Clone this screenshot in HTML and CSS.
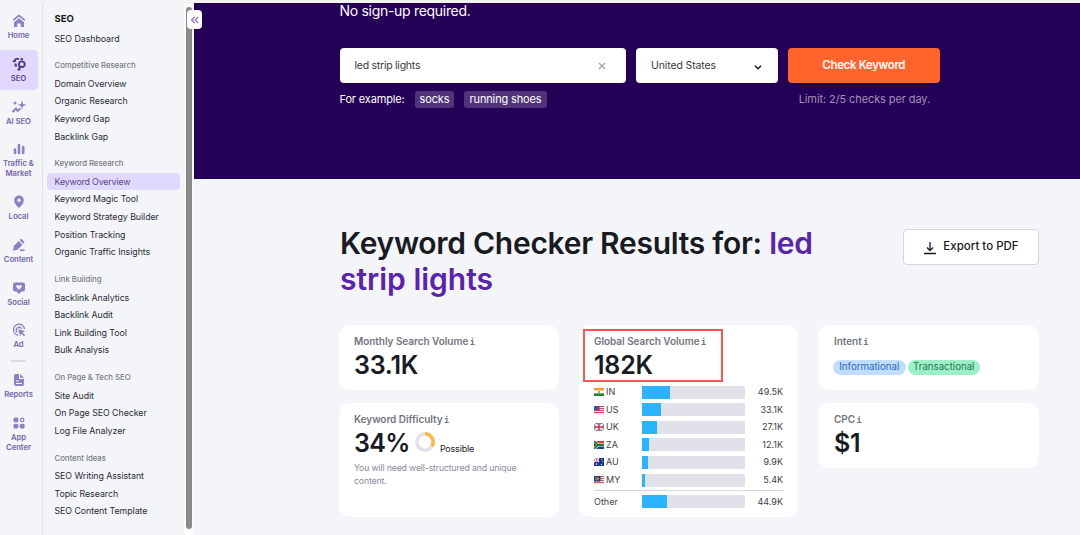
FILE: index.html
```html
<!DOCTYPE html>
<html lang="en">
<head>
<meta charset="utf-8">
<title>Keyword Checker</title>
<link rel="stylesheet" href="styles.css">
</head>
<body>
<div class="topline"></div>
<div class="app">
  <nav class="rail">
    <a class="rail-item"><svg viewBox="0 0 14 14"><path d="M1.200 6.200 7 1.600 12.800 6.200" fill="none" stroke="currentColor" stroke-width="1.600"/><path d="M7 4.300 12 8.300V13H8.700V9.500H5.300V13H2V8.300z" fill="currentColor"/></svg>Home</a>
    <a class="rail-item active"><svg viewBox="0 0 14 14" fill="none" stroke="currentColor" stroke-width="1.800"><circle cx="9.800" cy="7.300" r="2.900"/><path d="M7 1.800H5Q2.800 1.800 2.800 4V5M.700 4.300H2.800M3.500 6.500V8.500H5M5.500 12.500H7.500V9.500M8.500 2.200H11"/></svg>SEO</a>
    <a class="rail-item"><svg viewBox="0 0 14 14" fill="currentColor"><path d="M10 .500 11.100 3.900 14.500 5 11.100 6.100 10 9.500 8.900 6.100 5.500 5 8.900 3.900zM3 .800 3.700 2.300 5.200 3 3.700 3.700 3 5.200 2.300 3.700.800 3 2.300 2.300z"/><path d="m.500 12 3.500-3.500 1.500 2.300L8.500 8.500" fill="none" stroke="currentColor" stroke-width="2"/></svg>AI SEO</a>
    <a class="rail-item two"><svg viewBox="0 0 14 14" fill="none" stroke="currentColor" stroke-width="2.600" stroke-linecap="round"><path d="M3 7.500V11M7 3V11M11.200 5V11"/></svg>Traffic &amp;<br>Market</a>
    <a class="rail-item"><svg viewBox="0 0 14 14"><path d="M7 .500C4 .500 2.200 2.800 2.200 5.200 2.200 8.500 5 11 7 13 9 11 11.800 8.500 11.800 5.200 11.800 2.800 10 .500 7 .500zM7 3.500A1.700 1.700 0 1 1 7 6.900 1.700 1.700 0 1 1 7 3.500z" fill="currentColor" fill-rule="evenodd"/></svg>Local</a>
    <a class="rail-item"><svg viewBox="0 0 14 14" fill="currentColor"><path d="m1.800 8 5-5 3.700 3.700-5 5-4.500 1zM7.700 2 9.300.700l3.300 3.300-1.500 1.800z"/><path d="M8 12.200H12.500" stroke="currentColor" stroke-width="1.600"/></svg>Content</a>
    <a class="rail-item"><svg viewBox="0 0 14 14"><path d="M3 1.500H11Q13 1.500 13 3.500V8.500Q13 10.500 11 10.500H9.500L7 13 4.500 10.500H3Q1 10.500 1 8.500V3.500Q1 1.500 3 1.500zM7 8.700 9.700 6C10.500 4.200 8 3 7 4.800 6 3 3.500 4.200 4.300 6z" fill="currentColor" fill-rule="evenodd"/></svg>Social</a>
    <a class="rail-item"><svg viewBox="0 0 14 14" fill="none" stroke="currentColor" stroke-width="1.400"><path d="M6 12.200A5.500 5.500 0 1 1 12.500 6M5.200 9.300A2.900 2.900 0 1 1 9.700 5.800"/><path d="m6.200 6.200 7 2-2.700 1.200 2.700 2.700-1.200 1.200-2.700-2.700-1.200 2.700z" fill="currentColor" stroke="none"/></svg>Ad</a>
    <span class="rail-rule"></span>
    <a class="rail-item"><svg viewBox="0 0 14 14"><path d="M3.500 1H7V6H12V11Q12 13 10 13H4Q2 13 2 11V2.500Q2 1 3.500 1zM8.200 1 12 4.800H8.200zM4 7.500V8.600H7V7.500zM4 10V11.100H10V10z" fill="currentColor" fill-rule="evenodd"/></svg>Reports</a>
    <a class="rail-item"><svg viewBox="0 0 14 14" fill="currentColor"><rect x="1.500" y="1.500" width="4.800" height="4.800" rx="1.500"/><rect x="1.500" y="7.800" width="4.800" height="4.800" rx="1.500"/><rect x="7.800" y="7.800" width="4.800" height="4.800" rx="1.500"/><circle cx="10.200" cy="3.900" r="1.700" fill="none" stroke="currentColor" stroke-width="1.300"/></svg>App<br>Center</a>
  </nav>
  <aside class="menu">
    <h2 class="menu-title">SEO</h2>
    <a>SEO Dashboard</a>
    <h3>Competitive Research</h3>
    <a class="wide">Domain Overview</a><a>Organic Research</a><a>Keyword Gap</a><a>Backlink Gap</a>
    <h3>Keyword Research</h3>
    <a class="current">Keyword Overview</a><a>Keyword Magic Tool</a><a>Keyword Strategy Builder</a><a>Position Tracking</a><a>Organic Traffic Insights</a>
    <h3>Link Building</h3>
    <a>Backlink Analytics</a><a>Backlink Audit</a><a>Link Building Tool</a><a>Bulk Analysis</a>
    <h3>On Page &amp; Tech SEO</h3>
    <a>Site Audit</a><a>On Page SEO Checker</a><a>Log File Analyzer</a>
    <h3>Content Ideas</h3>
    <a>SEO Writing Assistant</a><a>Topic Research</a><a>SEO Content Template</a>
  </aside>
  <div class="scroll"><div class="thumb"></div></div>
  <button class="collapse"><svg viewBox="0 0 8 8"><path d="M3.700.800.700 4l3 3.200M7.200.800 4.200 4l3 3.200" fill="none" stroke="currentColor" stroke-width="1.200"/></svg></button>
  <main>
    <section class="hero">
      <p class="lead">No sign-up required.</p>
      <div class="search">
        <div class="field query"><span>led strip lights</span><svg class="clear" viewBox="0 0 8 8"><path d="m1 1 6 6M7 1 1 7" stroke="#a9abb6" stroke-width="1.500"/></svg></div>
        <div class="field country"><span>United States</span><svg class="chev" viewBox="0 0 8 8"><path d="m1 2.800 3 3 3-3" fill="none" stroke="#191b23" stroke-width="1.500"/></svg></div>
        <button class="check">Check Keyword</button>
      </div>
      <div class="below"><span class="example">For example:</span><a class="chip socks">socks</a><a class="chip shoes">running shoes</a><span class="limit">Limit: 2/5 checks per day.</span></div>
    </section>
    <section class="results">
      <header>
        <h1><span class="line1">Keyword Checker Results for: <em>led</em></span><br><em>strip lights</em></h1>
        <button class="export"><svg viewBox="0 0 14 14" fill="none" stroke="#191b23" stroke-width="1.300"><path d="M7 1V9.500M4 6.500 7 9.500l3-3M1 12.500H13"/></svg>Export to PDF</button>
      </header>
      <div class="cards">
        <div class="column">
          <article class="card short"><h4>Monthly Search Volume <i>i</i></h4><strong>33.1K</strong></article>
          <article class="card difficulty"><h4>Keyword Difficulty <i>i</i></h4><div class="score"><strong>34%</strong><svg viewBox="0 0 20 20" fill="none" stroke-width="3.500"><circle cx="10" cy="10" r="8.200" stroke="#e0e1e9"/><circle cx="10" cy="10" r="8.200" stroke="#fdb93b" pathLength="100" stroke-dasharray="34 66" transform="rotate(-90 10 10)"/></svg><span>Possible</span></div><p>You will need well-structured and unique content.</p></article>
        </div>
        <article class="card global"><h4>Global Search Volume <i>i</i></h4><strong>182K</strong><div class="mark"></div>
          <div class="rows">
            <div class="row"><svg class="flag" viewBox="0 0 10 8"><path fill="#f49b35" d="M0 0H10V8H0z"/><path fill="#fff" d="M0 2.500H10V5.500H0z"/><path fill="#19852d" d="M0 5.500H10V8H0z"/><circle cx="5" cy="4" r="1" fill="#667bb8"/></svg><span class="code">IN</span><div class="bar"><b style="width:27%"></b></div><span class="value">49.5K</span></div>
            <div class="row"><svg class="flag" viewBox="0 0 10 8"><path fill="#f4dfe5" d="M0 0H10V8H0z"/><path stroke="#cf4057" d="M0 .500H10M0 2.500H10M0 4.500H10M0 6.500H10"/><path fill="#48509c" d="M0 0H5.500V4.500H0z"/></svg><span class="code">US</span><div class="bar"><b style="width:18%"></b></div><span class="value">33.1K</span></div>
            <div class="row"><svg class="flag" viewBox="0 0 10 8"><path fill="#354994" d="M0 0H10V8H0z"/><path stroke="#fff" stroke-width="1.500" d="m0 0 10 8M10 0 0 8"/><path stroke="#fff" stroke-width="3" d="M5 0V8M0 4H10"/><path stroke="#d2283f" stroke-width="1.500" d="M5 0V8M0 4H10"/></svg><span class="code">UK</span><div class="bar"><b style="width:14.500%"></b></div><span class="value">27.1K</span></div>
            <div class="row"><svg class="flag" viewBox="0 0 10 8"><path fill="#d84234" d="M0 0H10V4H0z"/><path fill="#273b87" d="M0 4H10V8H0z"/><path d="m0 0 4 4-4 4M4 4H10" fill="none" stroke="#fff" stroke-width="3"/><path d="m0 0 4 4-4 4M4 4H10" fill="none" stroke="#087b4c" stroke-width="1.800"/><path d="m0 2 2.500 2L0 6z" fill="#171717" stroke="#e9b52d" stroke-width=".5"/></svg><span class="code">ZA</span><div class="bar"><b style="width:7%"></b></div><span class="value">12.1K</span></div>
            <div class="row"><svg class="flag" viewBox="0 0 10 8"><path fill="#17358a" d="M0 0H10V8H0z"/><path stroke="#fff" stroke-width="1.200" d="m0 0 5 4M5 0 0 4M2.500 0V4M0 2H5"/><path stroke="#d54450" stroke-width=".6" d="M2.500 0V4M0 2H5"/><g fill="#fff"><circle cx="2.500" cy="6" r=".8"/><circle cx="7.500" cy="1.500" r=".5"/><circle cx="8.700" cy="3.300" r=".5"/><circle cx="7.500" cy="6.300" r=".6"/></g></svg><span class="code">AU</span><div class="bar"><b style="width:5.500%"></b></div><span class="value">9.9K</span></div>
            <div class="row"><svg class="flag" viewBox="0 0 10 8"><path fill="#f1dce0" d="M0 0H10V8H0z"/><path stroke="#d34d5a" stroke-width=".9" d="M0 .500H10M0 2.500H10M0 4.500H10M0 6.500H10"/><path fill="#24367f" d="M0 0H6.500V5.500H0z"/><circle cx="2.800" cy="2.700" r="1.300" fill="none" stroke="#e3bf45" stroke-width=".8"/><circle cx="4.300" cy="2.700" r=".8" fill="#e3bf45"/></svg><span class="code">MY</span><div class="bar"><b style="width:3%"></b></div><span class="value">5.4K</span></div>
            <div class="row other"><span class="code">Other</span><div class="bar"><b style="width:24.500%"></b></div><span class="value">44.9K</span></div>
          </div>
        </article>
        <div class="column">
          <article class="card short right"><h4>Intent <i>i</i></h4><div class="tags"><span class="tag blue">Informational</span><span class="tag green">Transactional</span></div></article>
          <article class="card short right"><h4>CPC <i>i</i></h4><strong>$1</strong></article>
        </div>
      </div>
    </section>
  </main>
</div>
</body>
</html>
```
FILE: styles.css
```css
* { box-sizing: border-box; }
body { margin: 0; width: 1080px; height: 535px; overflow: hidden; font-family: Inter, "Liberation Sans", sans-serif; background: #f4f5f9; color: #191b23; }
h1, h2, h3, h4, p { margin: 0; }
button { padding: 0; border: 0; font-family: inherit; }
svg { display: block; flex: none; }
em, i { font-style: normal; }
.topline { height: 3px; background: #f3f3f3; }
.app { position: relative; display: flex; height: 532px; }
.rail { width: 43px; flex: none; border-right: 1px solid #e0e1e9; padding-top: 4px; }
.rail-item { width: 38px; height: 40px; margin-bottom: 2.750px; padding: 7px 1px 0 0; display: flex; flex-direction: column; align-items: center; text-align: center; color: #7664ac; font-size: 7.700px; line-height: 10px; font-weight: 600; letter-spacing: -.05px; white-space: nowrap; border-radius: 0 4px 4px 0; }
.rail-item svg { width: 14px; height: 14px; margin-bottom: 3px; color: #8f7fc5; }
.rail-item.active { background: #e1d9fd; color: #5c4592; }
.rail-item.active svg { color: #4c347f; }
.rail-item.two { height: 50px; }
.rail-rule { display: block; width: 15px; height: 2px; margin: 4px 0 3.500px 11px; background: #dadbe5; }
.menu { width: 141px; flex: none; padding: 7px 3px 0 4px; }
.menu a { display: block; height: 17.650px; line-height: 17.650px; padding-left: 7.500px; font-size: 8.800px; letter-spacing: -.04px; white-space: nowrap; color: #292b35; }
.menu .wide { letter-spacing: -.1px; }
.menu-title { height: 19.600px; padding-left: 7.500px; font-size: 9.500px; line-height: 17px; }
.menu h3 { height: 27.500px; padding: 12.200px 0 0 7.500px; font-size: 7.800px; line-height: 12px; font-weight: 500; letter-spacing: -.04px; color: #777a86; }
.menu .current { color: #58458d; background: #e1d9fd; border-radius: 4px; width: 133px; letter-spacing: -.15px; }
.scroll { width: 9px; flex: none; padding: 4px 1px 0 2px; background: #fcfcfd; }
.thumb { width: 6px; height: 522px; border-radius: 3px; background: #8b8b8b; }
.collapse { position: absolute; left: 187px; top: 7px; width: 15px; height: 19px; border-radius: 4px; background: #fff; color: #8067cf; display: grid; place-items: center; }
.collapse svg { width: 8px; height: 8px; }
main { flex: 1; margin-left: 1px; }
.hero { height: 176px; background: #240057; padding-left: 145.500px; color: #fff; }
.lead { height: 45px; font-size: 14px; line-height: 15px; letter-spacing: -.3px; }
.search { display: flex; gap: 10px; height: 35px; }
.field { display: flex; align-items: center; justify-content: space-between; background: #fff; color: #363842; border-radius: 4px; padding: 0 16px 0 15px; font-size: 10.500px; }
.query { width: 286.500px; padding-right: 20px; }
.query span { letter-spacing: -.25px; padding-bottom: 1px; }
.country { width: 141.500px; }
.country span { letter-spacing: -.12px; }
.clear, .chev { width: 8px; height: 8px; }
.chev { margin-top: 2px; }
.check { width: 152.500px; border-radius: 4px; background: #ff642d; color: #fff; font-size: 11.500px; font-weight: 600; letter-spacing: -.35px; padding-bottom: 2px; }
.below { display: flex; align-items: center; height: 17px; margin-top: 8px; font-size: 11px; line-height: 15px; letter-spacing: -.15px; }
.example { width: 75.500px; padding-bottom: 1px; }
.chip { width: 39px; text-align: center; height: 17px; line-height: 16px; border-radius: 3px; background: #503379; }
.socks { margin-right: 10px; }
.shoes { width: 83px; }
.limit { margin-left: auto; margin-right: 150px; padding-bottom: 1px; letter-spacing: -.1px; color: #a38fb8; }
.results { padding: 46px 41px 0 145px; }
.results header { display: flex; justify-content: space-between; height: 100px; padding-left: 1px; }
h1 { font-size: 30px; line-height: 36px; font-weight: 600; white-space: nowrap; }
.line1 { letter-spacing: -.28px; }
h1 em { color: #5924ad; }
.export { width: 136px; height: 36px; margin-top: 4px; border: 1px solid #d4d6df; border-radius: 4px; background: #fff; display: flex; align-items: center; justify-content: center; gap: 6px; font-size: 11.500px; font-weight: 500; color: #191b23; padding-bottom: 2px; }
.export svg { width: 14px; height: 14px; margin-top: 3px; }
.cards { display: grid; grid-template-columns: 220px 219px 221px; gap: 20px; }
.column { display: grid; gap: 13px; align-content: start; }
.card { position: relative; padding: 9px 15px; border-radius: 10px; background: #fff; box-shadow: 0 0 1px #e9eaf0; }
.right { padding-left: 16px; }
.short { height: 65px; }
.difficulty { height: 114px; }
.global { height: 192px; }
h4 { font-size: 10px; line-height: 15px; font-weight: 600; letter-spacing: -.04px; color: #73757f; white-space: nowrap; }
h4 i { display: inline-block; width: 4px; font-family: "DejaVu Sans Mono", monospace; font-size: 8.500px; text-indent: -1px; }
strong { display: block; font-size: 25px; line-height: 31px; font-weight: 600; letter-spacing: -.2px; }
.score { display: flex; height: 34px; }
.score strong { letter-spacing: -.6px; }
.score svg { width: 20px; height: 20px; margin: 4px 5px 0; }
.score span { font-size: 9px; letter-spacing: -.2px; margin-top: 15px; line-height: 12px; }
.difficulty p { font-size: 8.700px; line-height: 12.700px; letter-spacing: -.13px; color: #898c98; }
.mark { position: absolute; left: 4px; top: 4px; width: 140px; height: 53px; border: 2px solid #ff5358; }
.rows { margin-top: 2.300px; }
.row { display: flex; align-items: center; height: 17.600px; font-size: 9px; color: #3e404b; }
.row span { padding-bottom: 1px; }
.flag { width: 10px; height: 8px; margin-right: 2px; }
.code { width: 36px; }
.bar { width: 103px; height: 13px; background: #e0e1e9; border-radius: 1px; }
.bar b { display: block; height: 100%; background: #2bb3ff; }
.value { margin-left: auto; }
.other { border-top: 1px solid #d4d6df; height: 23px; margin-top: 1px; }
.other .code { width: 48px; }
.tags { display: flex; gap: 2px; margin: 10px 0 0 -1px; }
.tag { width: 72.500px; height: 15px; line-height: 13px; border-radius: 8px; font-size: 9.700px; text-align: center; }
.blue { background: #bfdeff; color: #2c68bd; }
.green { background: #9cf0c5; color: #297653; }
```
